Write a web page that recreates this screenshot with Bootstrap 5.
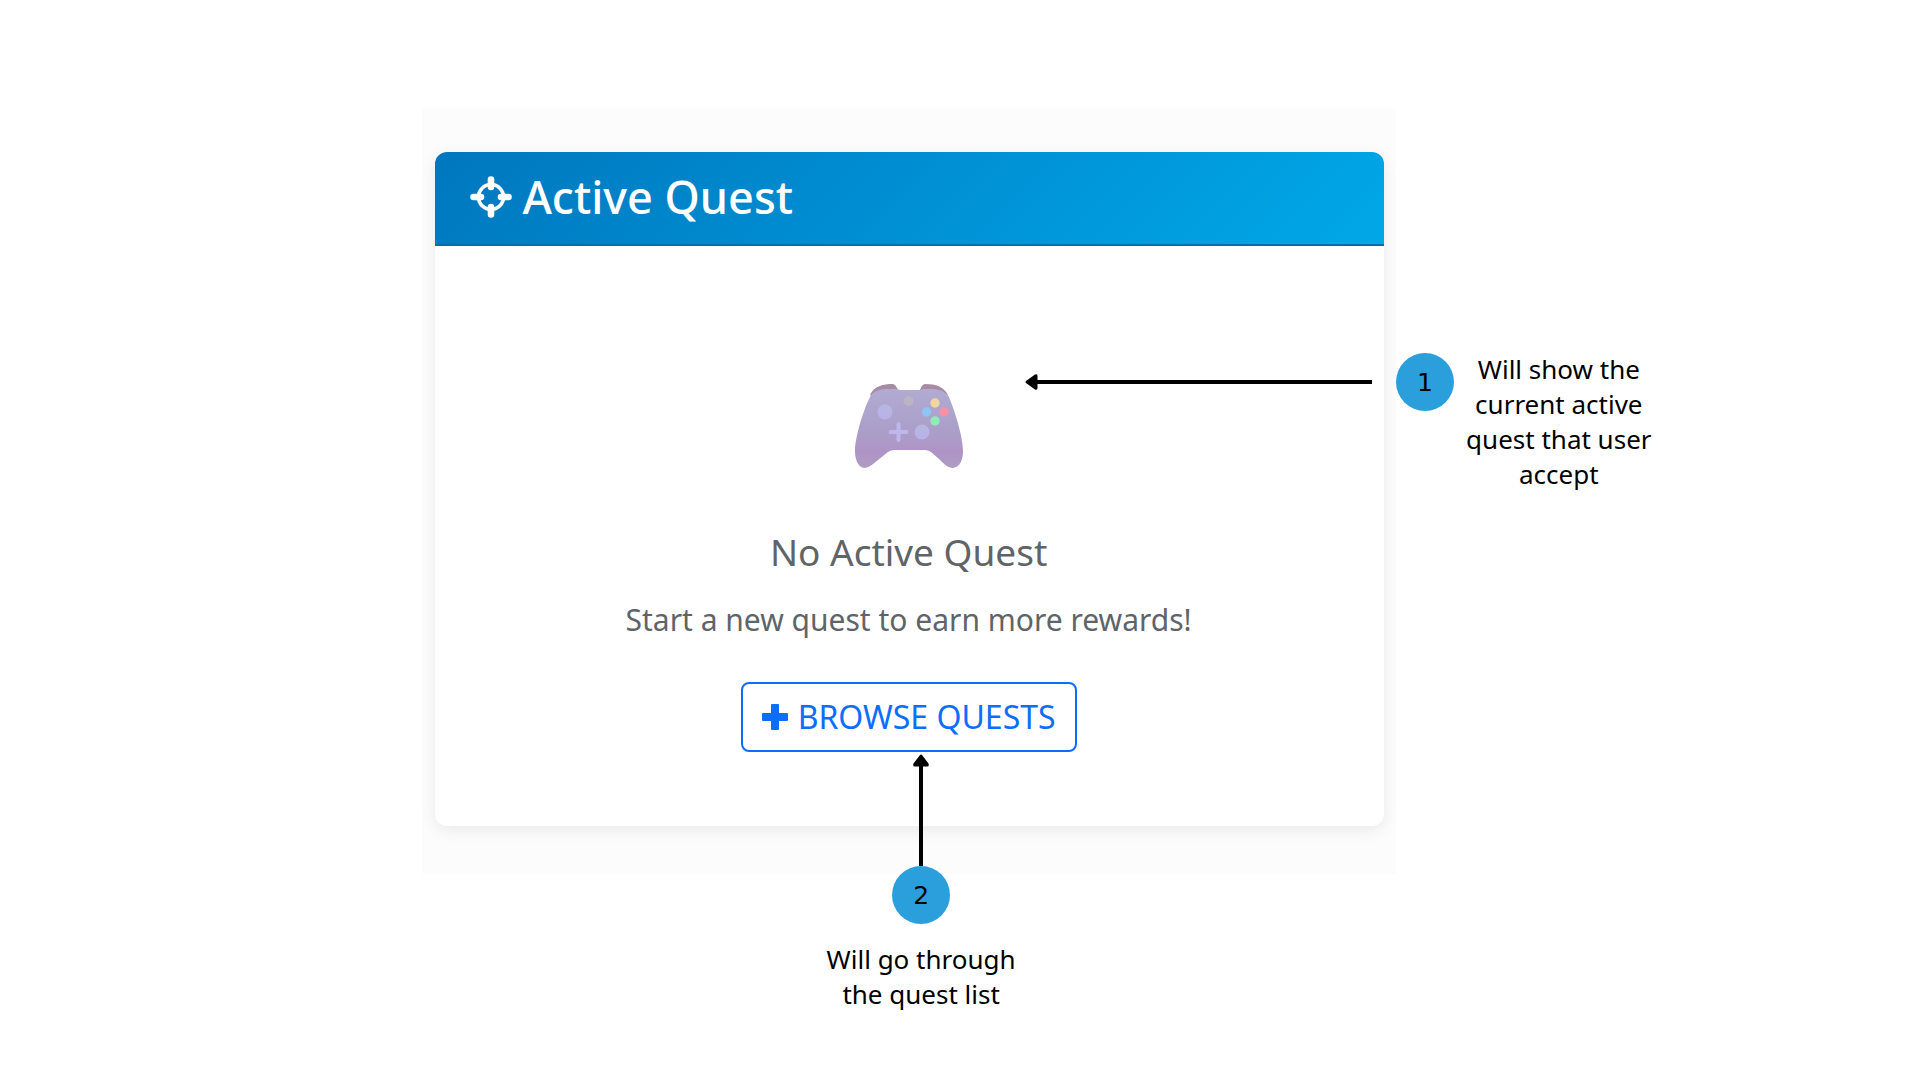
<!DOCTYPE html>
<html lang="en">
<head>
<meta charset="utf-8">
<meta name="viewport" content="width=device-width, initial-scale=1">
<title>Active Quest guide</title>
<link rel="stylesheet" href="https://cdn.jsdelivr.net/npm/bootstrap@5.3.0/dist/css/bootstrap.min.css">
<style>
  body { font-family: "Noto Sans", "Open Sans", sans-serif; background: #fff; color: #000; }
  .guide { display: grid; grid-template-columns: 22% 50.7% 1fr; padding: 108px 0 64px; }
  .preview { grid-column: 2; background: #fcfcfc; padding: 44px 12px 48px 13px; }
  .quest-card { --bs-card-border-width: 0; --bs-card-border-radius: 12px; --bs-card-inner-border-radius: 12px; box-shadow: 0 4px 16px rgba(0, 0, 0, .08); }
  .quest-head { background: linear-gradient(135deg, #0077be, #00a8e8); border-bottom: 2px solid #006fae; padding: 22px 35px 24px; }
  .quest-head h1 { font-size: 45px; line-height: 46px; font-weight: 500; gap: 9px; }
  .quest-body { padding: 137px 26px 74px 24px; color: #5f6469; }
  .quest-body h2 { font-size: 37px; line-height: 44px; font-weight: 400; margin: 61px 0 24px; }
  .quest-body p { font-size: 30px; line-height: 44px; margin-bottom: 40px; }
  .browse { --bs-btn-font-size: 32px; --bs-btn-line-height: 44px; --bs-btn-padding-x: 19px; --bs-btn-padding-y: 11px; --bs-btn-border-width: 2px; --bs-btn-border-radius: 8px; }
  .callout-text { font-size: 26px; line-height: 35px; width: 190px; }
  .dot { width: 58px; height: 58px; background: #2b9fdc; font: 25px "DejaVu Sans", sans-serif; }
  .side { grid-column: 3; margin-top: 245px; gap: 10px; }
  .side .callout-text { margin-top: -1px; }
  .below { grid-column: 2; margin-top: -8px; padding-left: 24px; gap: 18px; z-index: 1; }
  .arrow-left { right: 100%; top: 21px; margin-right: 24px; }
  .arrow-up { bottom: 100%; left: 50%; transform: translateX(-50%); }
</style>
</head>
<body>
<main class="guide">
  <section class="preview">
    <div class="card quest-card">
      <div class="card-header quest-head text-white">
        <h1 class="d-flex align-items-center m-0">
          <svg width="43" height="42" viewBox="0 0 43 42" fill="none" stroke="#fff" aria-hidden="true">
            <circle cx="21" cy="21" r="12.5" stroke-width="3.6"/>
            <path d="M21 3.500v7.500M21 31v7.500M3.500 21h7.500M31 21h7.500" stroke-width="6.6" stroke-linecap="round"/>
          </svg>
          Active Quest
        </h1>
      </div>
      <div class="card-body quest-body d-flex flex-column align-items-center text-center">
        <svg width="110" height="86" viewBox="0 0 110 86" role="img" aria-label="Game controller">
          <defs>
            <linearGradient id="pad" x1="0" y1="0" x2="0" y2="1"><stop offset="0" stop-color="#b1abd2"/><stop offset=".5" stop-color="#ab9fc9"/><stop offset=".8" stop-color="#ae94c5"/><stop offset="1" stop-color="#ae9cc3"/></linearGradient>
            <linearGradient id="stick" x1="0" y1="0" x2="0" y2="1"><stop offset="0" stop-color="#b5b8df"/><stop offset="1" stop-color="#bab1ea"/></linearGradient>
          </defs>
          <path d="M16 12C20 3 29 1 39 1Q42 2 44 7L66 7Q68 1 71 1C82 1 90 4 94 12Z" fill="#a78ba5"/>
          <path d="M17 12Q22 6 32 6L43 6Q45 7 47 7H65Q67 7 69 6H78Q90 6 95 14C102 31 109 55 109 68C109 77 106 84 99 85C94 85 90 81 85 76L77 69Q74 67 71 67H40Q37 67 34 69L24 77C19 81 15 85 10 85C4 84 1 77 1 68C1 55 9 27 17 12Z" fill="url(#pad)"/>
          <circle cx="31" cy="29" r="7.5" fill="url(#stick)"/>
          <circle cx="68" cy="49" r="7.5" fill="url(#stick)"/>
          <path d="M44.500 41v16M36.500 49h16" stroke="#bdb7ed" stroke-width="4" stroke-linecap="round"/>
          <circle cx="54.500" cy="18" r="5" fill="#bbb5c3"/>
          <circle cx="81" cy="20" r="4.700" fill="#f3d5a0"/>
          <circle cx="72.500" cy="29" r="4.700" fill="#8fc5f3"/>
          <circle cx="90" cy="29" r="4.700" fill="#f78fa5"/>
          <circle cx="81" cy="38" r="4.700" fill="#90ebb9"/>
        </svg>
        <h2>No Active Quest</h2>
        <p>Start a new quest to earn more rewards!</p>
        <button type="button" class="btn btn-outline-primary browse d-flex align-items-center gap-2">
          <svg width="28" height="26" viewBox="0 0 28 26" aria-hidden="true"><path d="M10 0h6q1 0 1 1v8h8q1 0 1 1v6q0 1-1 1h-8v8q0 1-1 1h-6q-1 0-1-1v-8H1q-1 0-1-1v-6q0-1 1-1h8V1q0-1 1-1Z" fill="currentColor"/></svg>
          BROWSE QUESTS
        </button>
      </div>
    </div>
  </section>

  <aside class="side d-flex align-items-start position-relative">
    <svg class="arrow-left position-absolute" width="347" height="16" viewBox="0 0 347 16" aria-hidden="true">
      <path d="M10 8H347" stroke="#000" stroke-width="4"/>
      <path d="M1 7 10 .5Q12.500-.5 12.500 2V14Q12.500 16.500 10 15.500L1 9Q0 8 1 7Z"/>
    </svg>
    <span class="dot rounded-circle d-flex flex-shrink-0 align-items-center justify-content-center">1</span>
    <div class="callout-text text-center">Will show the current active quest that user accept</div>
  </aside>

  <aside class="below d-flex flex-column align-items-center">
    <div class="position-relative">
      <svg class="arrow-up position-absolute" width="16" height="112" viewBox="0 0 16 112" aria-hidden="true">
        <path d="M8 10V112" stroke="#000" stroke-width="4"/>
        <path d="M7 1 .5 9.500Q-.5 12.500 2 12.500H14Q16.500 12.500 15.500 9.500L9 1Q8 0 7 1Z"/>
      </svg>
      <span class="dot rounded-circle d-flex align-items-center justify-content-center">2</span>
    </div>
    <div class="callout-text text-center">Will go through the quest list</div>
  </aside>
</main>
<script src="https://cdn.jsdelivr.net/npm/bootstrap@5.3.0/dist/js/bootstrap.bundle.min.js"></script>
</body>
</html>
